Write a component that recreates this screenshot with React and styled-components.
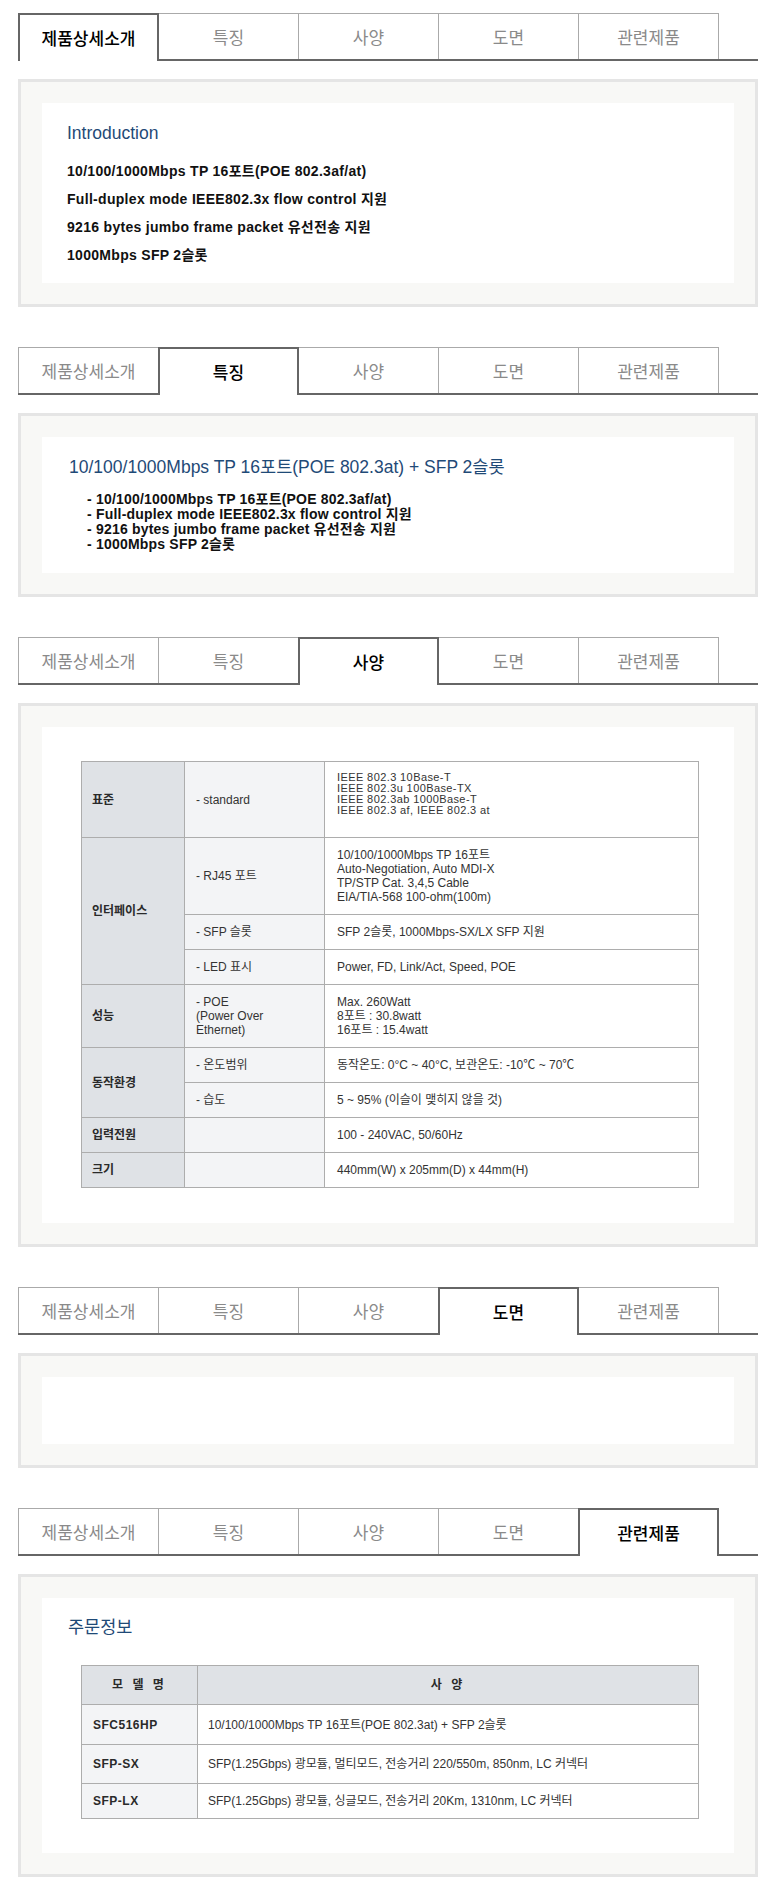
import React from 'react';
import styled, { createGlobalStyle } from 'styled-components';

const FONT = `"Liberation Sans", "Noto Sans CJK KR", sans-serif`;

const GlobalStyle = createGlobalStyle`
  html, body { margin: 0; padding: 0; background: #fff; }
  body { font-family: ${FONT}; color: #333; }
  * { box-sizing: border-box; }
`;

const Page = styled.div`
  width: 769px;
  padding: 13px 11px 22px 18px;
  display: flex;
  flex-direction: column;
  gap: 40px;
`;

const Section = styled.section`
  display: flex;
  flex-direction: column;
  gap: 18px;
`;

const TabBar = styled.div`
  display: flex;
  align-items: flex-start;
  height: 48px;
  border-bottom: 2px solid #666;
`;

const Tab = styled.div`
  flex: none;
  width: 141px;
  height: ${(p) => (p.$active ? 48 : 46)}px;
  margin-left: -1px;
  margin-bottom: ${(p) => (p.$active ? '-2px' : '0')};
  padding-bottom: ${(p) => (p.$active ? '2px' : '0')};
  &:first-child { margin-left: 0; }
  border: ${(p) => (p.$active ? '2px solid #666' : '1px solid #aaa')};
  border-bottom: none;
  background: #fff;
  position: relative;
  z-index: ${(p) => (p.$active ? 1 : 0)};
  display: flex;
  align-items: center;
  justify-content: center;
  font-family: "Noto Sans CJK KR", sans-serif;
  font-size: 17px;
  color: ${(p) => (p.$active ? '#000' : '#8a8a8a')};
  font-weight: ${(p) => (p.$active ? 500 : 400)};
`;

const Panel = styled.div`
  border: 3px solid #e5e5e5;
  background: #f8f8f6;
  padding: 21px;
`;

const Inner = styled.div`
  background: #fff;
  padding: ${(p) => p.$pad || '0'};
  min-height: ${(p) => p.$minH || 0}px;
`;

const Heading = styled.h3`
  margin: 0 0 ${(p) => p.$gap || 0}px;
  font-size: 17.5px;
  line-height: 20px;
  font-weight: 400;
  color: #1f4a77;
`;

const IntroLine = styled.p`
  margin: 0;
  font-size: 14px;
  line-height: 28px;
  font-weight: 700;
  color: #111;
  letter-spacing: 0.3px;
`;

const FeatureList = styled.ul`
  list-style: none;
  margin: 15px 0 0 18px;
  padding: 0;
`;

const FeatureItem = styled.li`
  font-size: 14px;
  line-height: 15px;
  font-weight: 700;
  color: #111;
  letter-spacing: 0.2px;
`;

const DataTable = styled.table`
  width: 618px;
  margin-left: ${(p) => p.$ml || 0}px;
  border-collapse: collapse;
  font-size: 12px;
  color: #333;
`;

const Row = styled.tr`
  height: ${(p) => (p.$h ? `${p.$h}px` : 'auto')};
`;

const TONES = { head: '#dfe2e6', sub: '#f3f4f6', plain: '#fff' };

const Cell = styled.td`
  border: 1px solid #adadad;
  padding: 10px ${(p) => p.$padX || 11}px;
  line-height: 14px;
  vertical-align: middle;
  text-align: ${(p) => (p.$center ? 'center' : 'left')};
  background: ${(p) => TONES[p.$tone || 'plain']};
  font-weight: ${(p) => (p.$bold ? 700 : 400)};
  letter-spacing: ${(p) => p.$ls || 0}px;
  color: ${(p) => (p.$bold ? '#2a2a2a' : '#333')};
  white-space: nowrap;
`;

const Line = styled.div`
  font-size: ${(p) => p.$fs || 12}px;
  letter-spacing: ${(p) => (p.$fs ? 0.4 : 0)}px;
  line-height: ${(p) => p.$lh || 14}px;
  min-height: ${(p) => p.$lh || 14}px;
`;

const TABS = ['제품상세소개', '특징', '사양', '도면', '관련제품'];

const Tabs = ({ active }) => (
  <TabBar>
    {TABS.map((t, i) => (
      <Tab key={t} $active={i === active}>
        {t}
      </Tab>
    ))}
  </TabBar>
);

const INTRO = [
  '10/100/1000Mbps TP 16포트(POE 802.3af/at)',
  'Full-duplex mode IEEE802.3x flow control 지원',
  '9216 bytes jumbo frame packet 유선전송 지원',
  '1000Mbps SFP 2슬롯',
];

const SPEC = [
  {
    group: '표준',
    span: 1,
    label: ['- standard'],
    value: ['IEEE 802.3 10Base-T', 'IEEE 802.3u 100Base-TX', 'IEEE 802.3ab 1000Base-T', 'IEEE 802.3 af, IEEE 802.3 at', ''],
    lh: 11,
    fs: 11,
  },
  {
    group: '인터페이스',
    span: 3,
    label: ['- RJ45 포트'],
    value: ['10/100/1000Mbps TP 16포트', 'Auto-Negotiation, Auto MDI-X', 'TP/STP Cat. 3,4,5 Cable', 'EIA/TIA-568 100-ohm(100m)'],
  },
  { label: ['- SFP 슬롯'], value: ['SFP 2슬롯, 1000Mbps-SX/LX SFP 지원'] },
  { label: ['- LED 표시'], value: ['Power, FD, Link/Act, Speed, POE'] },
  {
    group: '성능',
    span: 1,
    label: ['- POE', '(Power Over', 'Ethernet)'],
    value: ['Max. 260Watt', '8포트 : 30.8watt', '16포트 : 15.4watt'],
  },
  { group: '동작환경', span: 2, label: ['- 온도범위'], value: ['동작온도: 0°C ~ 40°C, 보관온도: -10℃ ~ 70℃'] },
  { label: ['- 습도'], value: ['5 ~ 95% (이슬이 맺히지 않을 것)'] },
  { group: '입력전원', span: 1, label: [], value: ['100 - 240VAC, 50/60Hz'] },
  { group: '크기', span: 1, label: [], value: ['440mm(W) x 205mm(D) x 44mm(H)'] },
];

const PRODUCTS = [
  { model: 'SFC516HP', spec: '10/100/1000Mbps TP 16포트(POE 802.3at) + SFP 2슬롯', h: 40 },
  { model: 'SFP-SX', spec: 'SFP(1.25Gbps) 광모듈, 멀티모드, 전송거리 220/550m, 850nm, LC 커넥터', h: 39 },
  { model: 'SFP-LX', spec: 'SFP(1.25Gbps) 광모듈, 싱글모드, 전송거리 20Km, 1310nm, LC 커넥터', h: 35 },
];

const Lines = ({ items, lh, fs }) => (
  <>
    {items.map((l, i) => (
      <Line key={i} $lh={lh} $fs={fs}>
        {l || '\u00a0'}
      </Line>
    ))}
  </>
);

export default function App() {
  return (
    <>
      <GlobalStyle />
      <Page>
        <Section>
          <Tabs active={0} />
          <Panel>
            <Inner $pad="20px 25px 14px">
              <Heading $gap={14}>Introduction</Heading>
              {INTRO.map((l) => (
                <IntroLine key={l}>{l}</IntroLine>
              ))}
            </Inner>
          </Panel>
        </Section>

        <Section>
          <Tabs active={1} />
          <Panel>
            <Inner $pad="20px 27px 21px">
              <Heading>10/100/1000Mbps TP 16포트(POE 802.3at) + SFP 2슬롯</Heading>
              <FeatureList>
                {INTRO.map((l) => (
                  <FeatureItem key={l}>- {l}</FeatureItem>
                ))}
              </FeatureList>
            </Inner>
          </Panel>
        </Section>

        <Section>
          <Tabs active={2} />
          <Panel>
            <Inner $pad="34px 36px 35px 39px">
              <DataTable>
                <colgroup>
                  <col style={{ width: 103 }} />
                  <col style={{ width: 140 }} />
                  <col />
                </colgroup>
                <tbody>
                  {SPEC.map((r, i) => (
                    <tr key={i}>
                      {r.group && (
                        <Cell rowSpan={r.span} $tone="head" $bold $padX={10}>
                          {r.group}
                        </Cell>
                      )}
                      <Cell $tone="sub">
                        <Lines items={r.label} />
                      </Cell>
                      <Cell $padX={12}>
                        <Lines items={r.value} lh={r.lh} fs={r.fs} />
                      </Cell>
                    </tr>
                  ))}
                </tbody>
              </DataTable>
            </Inner>
          </Panel>
        </Section>

        <Section>
          <Tabs active={3} />
          <Panel>
            <Inner $minH={67} />
          </Panel>
        </Section>

        <Section>
          <Tabs active={4} />
          <Panel>
            <Inner $pad="19px 36px 34px 26px">
              <Heading $gap={28}>주문정보</Heading>
              <DataTable $ml={13}>
                <colgroup>
                  <col style={{ width: 116 }} />
                  <col />
                </colgroup>
                <tbody>
                  <Row $h={39}>
                    <Cell $tone="head" $bold $center $ls={3}>
                      모 델 명
                    </Cell>
                    <Cell $tone="head" $bold $center $ls={3}>
                      사 양
                    </Cell>
                  </Row>
                  {PRODUCTS.map((p) => (
                    <Row key={p.model} $h={p.h}>
                      <Cell $tone="sub" $bold $ls={0.5}>
                        {p.model}
                      </Cell>
                      <Cell $padX={10}>{p.spec}</Cell>
                    </Row>
                  ))}
                </tbody>
              </DataTable>
            </Inner>
          </Panel>
        </Section>
      </Page>
    </>
  );
}
